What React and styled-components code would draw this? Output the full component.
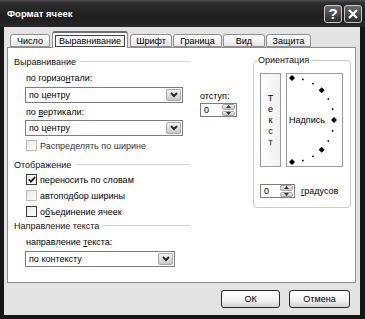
import styled, { createGlobalStyle } from "styled-components";

const GlobalStyle = createGlobalStyle`
  html, body {
    margin: 0;
    padding: 0;
    background: #fff;
  }
  body {
    font-family: "Liberation Sans", Arial, sans-serif;
    font-size: 9px;
    color: #000;
  }
`;

const Window = styled.div`
  width: 365px;
  height: 319px;
  box-sizing: border-box;
  background: #161616;
  display: flex;
  flex-direction: column;
  padding-bottom: 4px;
`;

const TitleBar = styled.div`
  height: 27px;
  flex: none;
  display: flex;
  align-items: center;
  padding: 0 3px 0 7px;
  background: linear-gradient(#505050 0, #2e2e2e 3px, #1e1e1e 60%, #262626 100%);
`;

const Title = styled.div`
  flex: 1;
  color: #fff;
  font-weight: bold;
  font-size: 9.5px;
`;

const TitleButtons = styled.div`
  display: flex;
  gap: 2px;
`;

const TitleButton = styled.div`
  width: 18px;
  height: 18px;
  box-sizing: border-box;
  border: 1px solid #c8c8c8;
  border-radius: 3px;
  background: linear-gradient(#6a6a6a, #2c2c2c);
  color: #fff;
  font-weight: bold;
  font-size: 15px;
  display: flex;
  align-items: center;
  justify-content: center;
`;

const Client = styled.div`
  flex: 1;
  margin: 0 5px 0 4px;
  background: #e3e3e3;
  padding: 4px 4px 0 3px;
  display: flex;
  flex-direction: column;
`;

const TabStrip = styled.div`
  height: 16px;
  display: flex;
  align-items: flex-end;
  gap: 1px;
  padding-left: 3px;
`;

const Tab = styled.div`
  position: relative;
  z-index: ${(p) => (p.$active ? 2 : 0)};
  width: ${(p) => p.$w}px;
  height: ${(p) => (p.$active ? 17 : 13)}px;
  margin: ${(p) => (p.$active ? "0 1px -1px" : "0")};
  box-sizing: border-box;
  border: 1px solid #8f8f8f;
  border-bottom: ${(p) => (p.$active ? "none" : "1px solid #8f8f8f")};
  border-top: ${(p) => (p.$active ? "2px solid #6e6e6e" : "1px solid #8f8f8f")};
  border-radius: 3px 3px 0 0;
  background: ${(p) => (p.$active ? "#fcfcfc" : "linear-gradient(#ffffff, #e6e6e6)")};
  display: flex;
  align-items: center;
  justify-content: center;
  white-space: nowrap;
`;

const FocusText = styled.span`
  border: 1px solid #444;
  padding: 0 3px;
  line-height: 10px;
`;

const Panel = styled.div`
  height: 236px;
  box-sizing: border-box;
  border: 1px solid #8e8e8e;
  background: #fff;
  display: flex;
  padding: 7px 0 0 6px;
`;

const LeftColumn = styled.div`
  width: 176px;
  display: flex;
  flex-direction: column;
`;

const GroupHeader = styled.div`
  margin-top: ${(p) => p.$top || 0}px;
  height: 13px;
  display: flex;
  align-items: center;
  color: #111;
  &::after {
    content: "";
    flex: 1;
    height: 1px;
    margin-left: 4px;
    background: #d2d2d2;
  }
`;

const FieldLabel = styled.div`
  margin: ${(p) => p.$top || 0}px 0 0 ${(p) => p.$left ?? 12}px;
  height: 13px;
  line-height: 13px;
  white-space: nowrap;
`;

const Key = styled.span`
  text-decoration: underline;
`;

const ComboBox = styled.div`
  margin: ${(p) => p.$top || 0}px 0 0 11px;
  width: ${(p) => p.$w}px;
  height: 16px;
  box-sizing: border-box;
  border: 1px solid #7d7d7d;
  display: flex;
  background: #fff;
`;

const ComboValue = styled.div`
  flex: 1;
  padding-left: 3px;
  line-height: 14px;
`;

const DropButton = styled.div`
  width: 15px;
  box-sizing: border-box;
  margin: 1px;
  border: 1px solid #a8a8a8;
  border-radius: 2px;
  background: linear-gradient(#f4f4f4, #c9c9c9);
  display: flex;
  align-items: center;
  justify-content: center;
`;

const CheckRow = styled.div`
  margin: ${(p) => p.$top || 0}px 0 0 12px;
  height: 13px;
  display: flex;
  align-items: center;
  gap: 3px;
  white-space: nowrap;
  color: ${(p) => (p.$muted ? "#333" : "#000")};
`;

const Box = styled.div`
  width: 11px;
  height: 11px;
  box-sizing: border-box;
  border: 1px solid ${(p) => (p.$faint ? "#b9b9b9" : "#3a3a3a")};
  background: linear-gradient(135deg, #e8e8e8, #ffffff);
  display: flex;
  align-items: center;
  justify-content: center;
`;

const MiddleColumn = styled.div`
  margin: 35px 0 0 10px;
  display: flex;
  flex-direction: column;
`;

const SpinBox = styled.div`
  margin-top: ${(p) => p.$top || 0}px;
  width: ${(p) => p.$w}px;
  height: 14px;
  box-sizing: border-box;
  border: 1px solid #7d7d7d;
  background: #fff;
  display: flex;
`;

const SpinValue = styled.div`
  flex: 1;
  padding-left: 3px;
  line-height: 12px;
`;

const SpinButtons = styled.div`
  width: 13px;
  display: flex;
  flex-direction: column;
  gap: 1px;
  padding: 0 1px 0 0;
`;

const SpinHalf = styled.div`
  flex: 1;
  border: 1px solid #a8a8a8;
  border-radius: 2px;
  background: linear-gradient(#f4f4f4, #c4c4c4);
  display: flex;
  align-items: center;
  justify-content: center;
`;

const OrientGroup = styled.div`
  position: relative;
  margin: 5px 0 0 16px;
  width: 98px;
  height: 148px;
  box-sizing: border-box;
  border: 1px solid #cacaca;
  border-radius: 4px;
  padding: 12px 0 0 6px;
`;

const Legend = styled.div`
  position: absolute;
  top: -7px;
  left: 3px;
  padding: 0 1px;
  background: #fff;
  color: #111;
  line-height: 13px;
`;

const OrientRow = styled.div`
  display: flex;
  gap: 5px;
`;

const VerticalText = styled.div`
  width: 21px;
  height: 94px;
  box-sizing: border-box;
  border: 1px solid #9a9a9a;
  background: linear-gradient(90deg, #ffffff, #f0f0f0);
  display: flex;
  flex-direction: column;
  align-items: center;
  justify-content: center;
  line-height: 11px;
`;

const Dial = styled.div`
  position: relative;
  width: 57px;
  height: 94px;
  box-sizing: border-box;
  border: 1px solid #9a9a9a;
  display: flex;
  align-items: center;
  padding-left: 2px;
`;

const DialMarks = styled.svg`
  position: absolute;
  inset: 0;
`;

const DialLabel = styled.span`
  position: relative;
`;

const DegreeRow = styled.div`
  margin-top: 17px;
  display: flex;
  align-items: center;
  gap: 6px;
`;

const Footer = styled.div`
  display: flex;
  justify-content: flex-end;
  gap: 9px;
  padding: 7px 6px 0 0;
`;

const Button = styled.div`
  width: ${(p) => p.$w}px;
  height: 18px;
  box-sizing: border-box;
  border: 1px solid #2a2a2a;
  border-radius: 3px;
  background: linear-gradient(#ffffff, #f0f0f0 60%, #d2d2d2);
  display: flex;
  align-items: center;
  justify-content: center;
`;

const Chevron = () => (
  <svg width="8" height="6" viewBox="0 0 8 6">
    <path d="M1 1 L4 4 L7 1" fill="none" stroke="#2a2a2a" strokeWidth="2" />
  </svg>
);

const Arrow = ({ up }) => (
  <svg width="5" height="3" viewBox="0 0 5 3">
    <path d={up ? "M0 3 L2.5 0 L5 3 Z" : "M0 0 L2.5 3 L5 0 Z"} fill="#333" />
  </svg>
);

const Combo = ({ w, top, children }) => (
  <ComboBox $w={w} $top={top}>
    <ComboValue>{children}</ComboValue>
    <DropButton>
      <Chevron />
    </DropButton>
  </ComboBox>
);

const Spin = ({ w, top }) => (
  <SpinBox $w={w} $top={top}>
    <SpinValue>0</SpinValue>
    <SpinButtons>
      <SpinHalf>
        <Arrow up />
      </SpinHalf>
      <SpinHalf>
        <Arrow />
      </SpinHalf>
    </SpinButtons>
  </SpinBox>
);

const Check = () => (
  <svg width="8" height="7" viewBox="0 0 8 7">
    <path d="M0.8 3.4 L3 5.6 L7.2 1" fill="none" stroke="#111" strokeWidth="1.8" />
  </svg>
);

const tabs = [
  ["Число", 40],
  ["Выравнивание", 76],
  ["Шрифт", 42],
  ["Граница", 49],
  ["Вид", 42],
  ["Защита", 45],
];

const marks = [90, 75, 60, 45, 30, 15, 0, -15, -30, -45, -60, -75, -90].map((a) => {
  const r = (a * Math.PI) / 180;
  return { x: 5 + 42 * Math.cos(r), y: 46 - 42 * Math.sin(r), big: a % 45 === 0 };
});

export default function App() {
  return (
    <>
      <GlobalStyle />
      <Window>
        <TitleBar>
          <Title>Формат ячеек</Title>
          <TitleButtons>
            <TitleButton>?</TitleButton>
            <TitleButton>
              <svg width="10" height="10" viewBox="0 0 10 10">
                <path d="M1 1 L9 9 M9 1 L1 9" stroke="#fff" strokeWidth="2.2" />
              </svg>
            </TitleButton>
          </TitleButtons>
        </TitleBar>
        <Client>
          <TabStrip>
            {tabs.map(([name, w]) =>
              name === "Выравнивание" ? (
                <Tab key={name} $w={w} $active>
                  <FocusText>{name}</FocusText>
                </Tab>
              ) : (
                <Tab key={name} $w={w}>
                  {name}
                </Tab>
              )
            )}
          </TabStrip>
          <Panel>
            <LeftColumn>
              <GroupHeader>Выравнивание</GroupHeader>
              <FieldLabel $top={4}>
                по горизо<Key>н</Key>тали:
              </FieldLabel>
              <Combo w={158} top={2}>
                по центру
              </Combo>
              <FieldLabel $top={3}>
                по <Key>в</Key>ертикали:
              </FieldLabel>
              <Combo w={158} top={1}>
                по центру
              </Combo>
              <CheckRow $top={3} $muted>
                <Box $faint />
                <span>Распределять по ширине</span>
              </CheckRow>
              <GroupHeader $top={6}>Отображение</GroupHeader>
              <CheckRow $top={2}>
                <Box>
                  <Check />
                </Box>
                <span>переносить по словам</span>
              </CheckRow>
              <CheckRow $top={3}>
                <Box $faint />
                <span>автоподбор ширины</span>
              </CheckRow>
              <CheckRow $top={3}>
                <Box />
                <span>
                  о<Key>б</Key>ъединение ячеек
                </span>
              </CheckRow>
              <GroupHeader $top={1}>Направление текста</GroupHeader>
              <FieldLabel $top={4}>
                направление <Key>т</Key>екста:
              </FieldLabel>
              <Combo w={150} top={2}>
                по контексту
              </Combo>
            </LeftColumn>
            <MiddleColumn>
              <FieldLabel $left={0}>отступ:</FieldLabel>
              <Spin w={37} />
            </MiddleColumn>
            <OrientGroup>
              <Legend>Ориентация</Legend>
              <OrientRow>
                <VerticalText>
                  <span>Т</span>
                  <span>е</span>
                  <span>к</span>
                  <span>с</span>
                  <span>т</span>
                </VerticalText>
                <Dial>
                  <DialMarks width="55" height="92">
                    {marks.map((m, i) =>
                      m.big ? (
                        <path
                          key={i}
                          d={`M${m.x} ${m.y - 3} L${m.x + 3} ${m.y} L${m.x} ${m.y + 3} L${m.x - 3} ${m.y} Z`}
                          fill="#000"
                        />
                      ) : (
                        <rect key={i} x={m.x - 0.8} y={m.y - 0.8} width="1.6" height="1.6" fill="#000" />
                      )
                    )}
                  </DialMarks>
                  <DialLabel>Надпись</DialLabel>
                </Dial>
              </OrientRow>
              <DegreeRow>
                <Spin w={35} />
                <span>
                  <Key>г</Key>радусов
                </span>
              </DegreeRow>
            </OrientGroup>
          </Panel>
          <Footer>
            <Button $w={59}>ОК</Button>
            <Button $w={61}>Отмена</Button>
          </Footer>
        </Client>
      </Window>
    </>
  );
}
